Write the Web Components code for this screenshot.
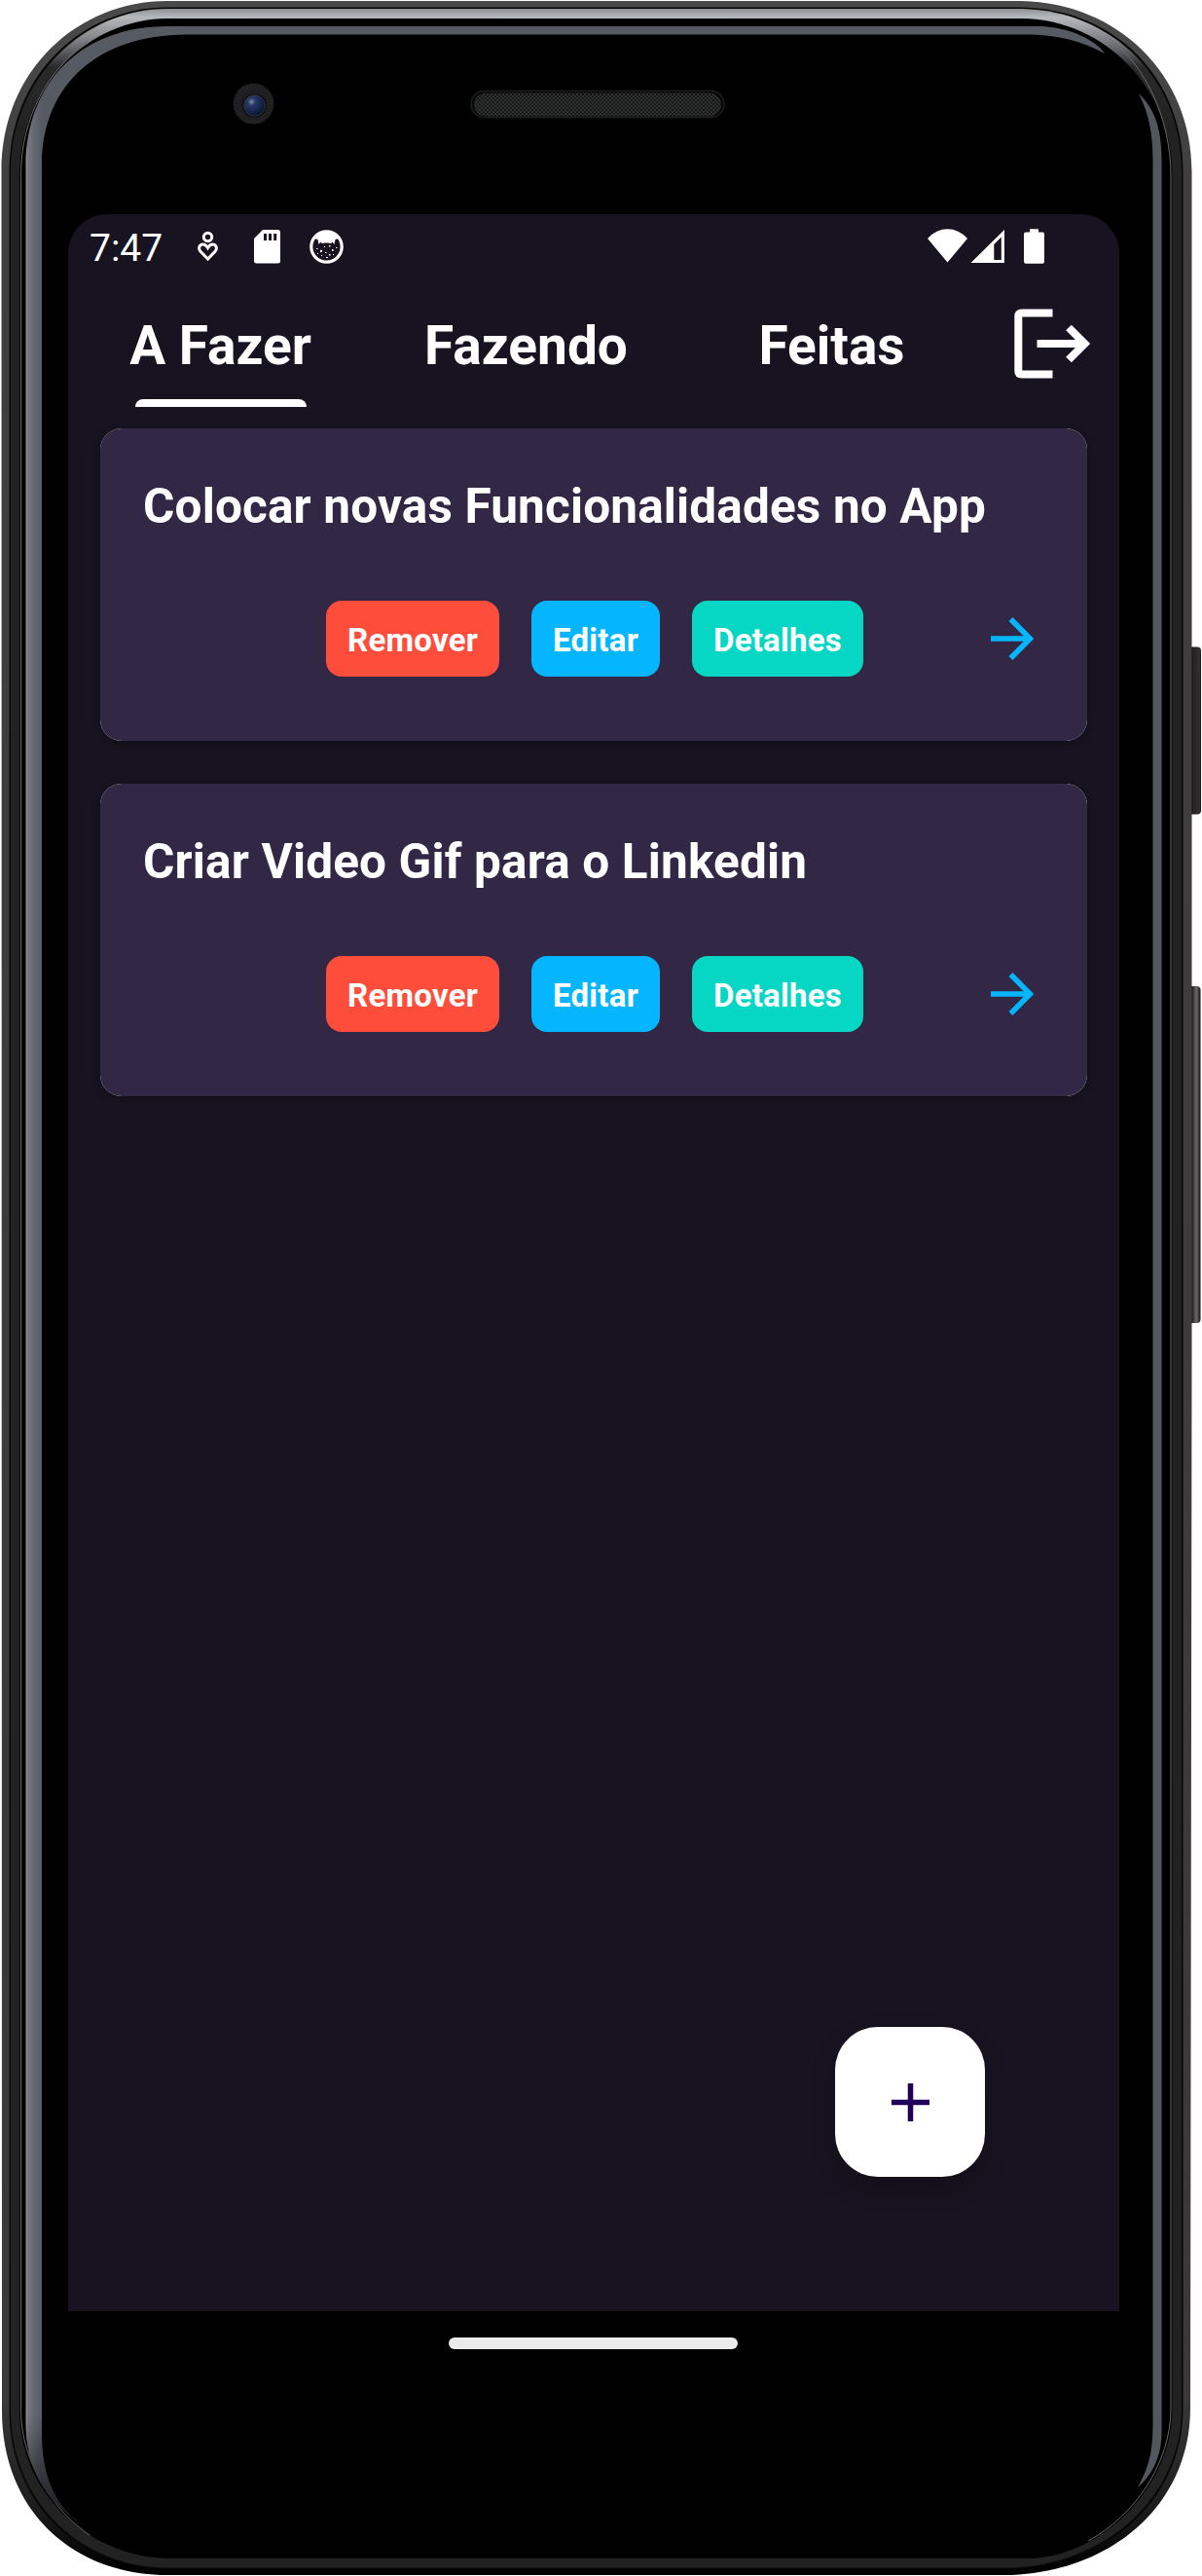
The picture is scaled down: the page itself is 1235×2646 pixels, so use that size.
<!DOCTYPE html>
<html lang="pt-BR">
<head>
<meta charset="utf-8">
<title>Tarefas</title>
<style>
html,body{margin:0;padding:0;background:#fff}
body{width:1235px;height:2646px;overflow:hidden;font-family:Roboto,"Liberation Sans",sans-serif;color:#fff}
</style>
</head>
<body>
<phone-frame>
  <status-bar time="7:47"></status-bar>
  <tab-bar>
    <tab-item active>A Fazer</tab-item>
    <tab-item>Fazendo</tab-item>
    <tab-item>Feitas</tab-item>
  </tab-bar>
  <task-list>
    <task-card>Colocar novas Funcionalidades no App</task-card>
    <task-card>Criar Video Gif para o Linkedin</task-card>
  </task-list>
  <add-button></add-button>
</phone-frame>
<script>
function define(name, html) {
  const t = document.createElement('template');
  t.innerHTML = html;
  customElements.define(name, class extends HTMLElement {
    constructor() {
      super();
      this.attachShadow({mode: 'open'}).appendChild(t.content.cloneNode(true));
    }
    connectedCallback() {
      const time = this.shadowRoot.querySelector('time');
      if (time) time.textContent = this.getAttribute('time');
    }
  });
}

define('phone-body', `
<style>:host{display:block;width:1235px;height:2646px}svg{display:block}</style>
<svg width="1235" height="2646" viewBox="0 0 1235 2646">
  <defs>
    <linearGradient id="rim" x1="0" y1="0" x2="0" y2="2646" gradientUnits="userSpaceOnUse">
      <stop offset="0" stop-color="#4b4a4a"/><stop offset=".07" stop-color="#403e3e"/><stop offset=".93" stop-color="#3a3838"/><stop offset=".975" stop-color="#1c1b1b"/><stop offset=".995" stop-color="#020202"/>
    </linearGradient>
    <linearGradient id="metal" x1="0" y1="8" x2="0" y2="130" gradientUnits="userSpaceOnUse">
      <stop offset="0" stop-color="#85888c"/><stop offset=".04" stop-color="#9fa2a6"/><stop offset=".08" stop-color="#b6b8bc"/><stop offset=".28" stop-color="#7c7e83"/><stop offset=".5" stop-color="#2a2a2b"/><stop offset="1" stop-color="#222"/>
    </linearGradient>
    <linearGradient id="bandL" x1="26" y1="0" x2="43" y2="0" gradientUnits="userSpaceOnUse">
      <stop offset="0" stop-color="#9c9c9c"/><stop offset=".15" stop-color="#77797d"/><stop offset=".5" stop-color="#666a73"/><stop offset="1" stop-color="#565a62"/>
    </linearGradient>
    <linearGradient id="fade" x1="0" y1="2480" x2="0" y2="2596" gradientUnits="userSpaceOnUse">
      <stop offset="0" stop-color="#000" stop-opacity="0"/><stop offset="1" stop-color="#000" stop-opacity=".75"/>
    </linearGradient>
    <linearGradient id="b1" x1="1222" y1="0" x2="1235" y2="0" gradientUnits="userSpaceOnUse">
      <stop offset="0" stop-color="#050505"/><stop offset=".35" stop-color="#242424"/><stop offset=".8" stop-color="#303030"/><stop offset="1" stop-color="#0a0a0a"/>
    </linearGradient>
    <linearGradient id="b2" x1="1222" y1="0" x2="1234" y2="0" gradientUnits="userSpaceOnUse">
      <stop offset="0" stop-color="#111"/><stop offset=".3" stop-color="#2c2c2c"/><stop offset=".6" stop-color="#6b6b6b"/><stop offset=".8" stop-color="#3a3a3a"/><stop offset="1" stop-color="#050505"/>
    </linearGradient>
    <radialGradient id="lens" cx=".36" cy=".32" r=".7">
      <stop offset="0" stop-color="#7f8db0"/><stop offset=".25" stop-color="#2b3a66"/><stop offset=".65" stop-color="#17264f"/><stop offset="1" stop-color="#0b1226"/>
    </radialGradient>
    <pattern id="mesh" width="4" height="4" patternUnits="userSpaceOnUse">
      <rect width="4" height="4" fill="#161717"/><circle cx="1" cy="1" r=".8" fill="#505353"/><circle cx="3" cy="3" r=".8" fill="#505353"/>
    </pattern>
  </defs>
  <rect x="1220" y="664.500" width="14" height="172" rx="4" fill="url(#b1)"/>
  <rect x="1219" y="1013" width="14.500" height="346" rx="4" fill="url(#b2)"/>
  <path fill="url(#rim)" d="M172 1H1050C1148 3 1224.500 76 1224.500 176V1400L1223 2474C1223 2568 1148 2640 1040 2645H172C76 2645 2 2580 2 2476L1.500 176C1.500 72 80 1 172 1Z"/>
  <path fill="#070707" d="M172 7.500H1050C1146 9.500 1215.500 80 1215.500 176V2474C1215.500 2564 1142 2635 1040 2639H172C82 2639 9.500 2572 9.500 2476V176C9.500 78 84 7.500 172 7.500Z"/>
  <path fill="url(#metal)" d="M172 9H1050C1144 11 1214 82 1214 176V2474C1214 2562 1140 2633 1040 2637.500H172C84 2637.500 11 2570 11 2476V176C11 80 86 9 172 9Z"/>
  <path fill="#000" d="M172 19H1050C1136 20 1204.500 92 1204.500 180V2474C1204.500 2554 1134 2624 1060 2628H172C90 2626 20 2560 20 2476V180C20 88 92 19 172 19Z"/>
  <path fill="none" stroke="#6a6a6a" stroke-width="1" d="M90 42C50 72 21.500 120 21.500 180V2476C21.500 2530 56 2580 92 2604M1140 40C1176 66 1203 122 1203 180V2474C1203 2530 1166 2584 1118 2610"/>
  <path fill="url(#bandL)" d="M172 27H1068C1100 28 1127 42 1135 55C1112 42 1085 36 1060 35.500H190C104 36 43 84 43 170V2500C43 2548 60 2578 86 2594C50 2572 27 2540 26.500 2490V170C27 84 84 27 172 27Z"/>
  <path fill="url(#fade)" d="M43.500 2480V2500C43.500 2548 60 2577 87 2594.500C50 2573 26.500 2540 26 2490V2480Z"/>
  <path fill="#54565d" d="M1170 96C1186 112 1193.500 130 1193.500 165V2500C1193 2524 1184 2542 1169 2555C1180 2534 1184.500 2520 1184.500 2490V165C1184.500 136 1180 116 1170 96Z"/>
  <circle cx="260.500" cy="106.500" r="21" fill="#1d1d1f"/>
  <circle cx="260.500" cy="106.500" r="17" fill="none" stroke="#252527" stroke-width="6" stroke-dasharray="1.500 1.500"/>
  <circle cx="261.500" cy="108.500" r="12" fill="#050505"/>
  <circle cx="261.500" cy="108.500" r="10.800" fill="url(#lens)" stroke="#44454a" stroke-width=".8"/>
  <rect x="484" y="93.500" width="260" height="27" rx="13.500" fill="#060606" stroke="#1c1d20" stroke-width="1.500"/>
  <rect x="487" y="95.500" width="254" height="24" rx="12" fill="url(#mesh)"/>
</svg>`);

define('home-bar', `
<style>:host{display:flex;justify-content:center;padding:27px 1px 0 0}i{width:297px;height:12px;border-radius:6px;background:#ebebeb}</style><i></i>`);

define('phone-frame', `
<style>
:host{display:grid;width:1235px;height:2646px}
phone-body,main{grid-area:1/1}
main{z-index:1;padding:220px 85px 0 70px;display:flex;flex-direction:column}
section{height:2154px;background:#171320;border-radius:40px 40px 0 0;display:flex;flex-direction:column}
</style>
<phone-body></phone-body>
<main><section><slot></slot></section><home-bar></home-bar></main>`);

define('status-bar', `
<style>
:host{display:flex;height:66px;padding:0 77px 0 22px;box-sizing:border-box;align-items:center;justify-content:space-between}
div{display:flex;align-items:flex-start}
time{font-size:39px;padding-top:4px;height:66px;box-sizing:border-box;line-height:63px;width:111px}
svg{display:block;fill:#fff}
.i{padding-top:15px;height:51px}
</style>
<div><time></time>
<div class="i">
<svg width="160" height="38" viewBox="203 235 160 38"><g fill="none" stroke="#fff" stroke-width="3"><circle cx="213.500" cy="243.500" r="4.200"/><path d="M213.500 266L206 258.300C203 254.500 205.500 251 208.500 251C211 251 212.300 252.500 213.500 254.500C214.700 252.500 216 251 218.500 251C221.500 251 224 254.500 221 258.300Z"/></g>
<path fill-rule="evenodd" d="M270 236H285.500Q288 236 288 238.500V268Q288 270.500 285.500 270.500H263.500Q261 270.500 261 268V245ZM271 240V247H274V240ZM276 240V247H279V240ZM281.200 240V247H284.200V240Z"/>
<circle cx="335.500" cy="253.500" r="15.700" fill="none" stroke="#fff" stroke-width="3.200"/>
<path d="M323 245Q326 238 335.500 238T348 245L344.500 246L343.500 251L341.500 248.500Q340 251 338 249.500H333Q331 251 329.500 248.500L327.500 251L326.500 246Z"/>
<g><rect x="325" y="255" width="1.500" height="1"/><rect x="329" y="257" width="2" height="2"/><rect x="333" y="253" width="1" height="1"/><rect x="338" y="252" width="1.500" height="1.500"/><rect x="341" y="256" width="1.500" height="2"/><rect x="345" y="254" width="1.500" height="1"/><rect x="334" y="259" width="1.500" height="1"/><rect x="338" y="261" width="1.500" height="1.500"/><rect x="330" y="262" width="1" height="1"/><rect x="335" y="264" width="2" height="1"/><rect x="342" y="261" width="1" height="1"/><rect x="326" y="260" width="1" height="1"/></g></svg></div></div>
<div class="i"><svg width="120" height="38" viewBox="953 235 120 38">
<path d="M973.500 269.500L953 245Q962 235.300 973.500 235.300T994 245Z"/>
<path fill-rule="evenodd" d="M1032 236V270H997.500ZM1028.800 243.500L1021.300 251V267H1028.800Z"/>
<path d="M1058 235.300H1067V238.500H1071Q1073 238.500 1073 240.500V268.500Q1073 270.700 1071 270.700H1054Q1052 270.700 1052 268.500V240.500Q1052 238.500 1054 238.500H1058Z"/></svg></div>`);

define('tab-item', `
<style>
:host{display:flex;flex-direction:column;align-items:center;width:314px;font-weight:700;font-size:55px}
span{line-height:64px;padding:37px 1px 0 0;height:87px;white-space:nowrap}
i{width:176px;height:8px;border-radius:8px 8px 0 0}
:host([active]) i{background:#fff}
</style><span><slot></slot></span><i></i>`);

define('tab-bar', `
<style>
:host{display:flex;height:132px;align-items:stretch}
div{flex:1;display:flex;align-items:center;justify-content:center;padding-top:1px}
svg{display:block}
</style><slot></slot>
<div><svg width="79" height="72" viewBox="0 0 79 72" fill="none" stroke="#fff" stroke-width="8"><path d="M39.500 4.500H8Q4.300 4.500 4.300 8V64Q4.300 67.500 8 67.500H39.500M23.500 36H72M56 19.500L72.500 36L56 52.500" /></svg></div>`);

define('task-list', `
<style>:host{display:flex;flex-direction:column;gap:44px;padding:22px 33px 0;flex:1}</style><slot></slot>`);

define('task-action', `
<style>
:host{display:flex;box-sizing:border-box;height:78px;border-radius:16px;padding:3px 22px 0;line-height:75px;font-size:33px;font-weight:700;letter-spacing:.24px;background:var(--bg)}
</style><slot></slot>`);

define('task-card', `
<style>
:host{display:block;height:321px;background:#fff;border-radius:22px;box-shadow:0 2px 8px rgba(0,0,0,.28)}
article{display:flex;flex-direction:column;box-sizing:border-box;height:321px;padding:51px 44px 0;background:#322845;border-radius:22px}
h2{margin:0 0 68px;font-size:49.5px;line-height:58px;font-weight:700;letter-spacing:.15px;white-space:nowrap}
div{display:flex;padding:0 11px 0 188px;align-items:center;gap:33px}
svg{margin-left:auto;display:block}
</style>
<article><h2><slot></slot></h2>
<div><task-action style="--bg:#ff4d3c">Remover</task-action><task-action style="--bg:#05b6ff">Editar</task-action><task-action style="--bg:#05d7c4">Detalhes</task-action>
<svg width="44" height="44" viewBox="0 0 44 44" fill="none" stroke="#05b6ff" stroke-width="5.500"><path d="M0 22H39M20.500 2L40.300 22L20.500 42"/></svg></div></article>`);

define('add-button', `
<style>
:host{display:flex;align-self:flex-end;margin:0 138px 138px 0;width:154px;height:154px;border-radius:44px;background:#fff;align-items:center;justify-content:center;box-shadow:0 12px 26px rgba(0,0,0,.2)}
svg{display:block}
</style><svg width="39" height="39" viewBox="0 0 39 39" stroke="#21005d" stroke-width="5.500"><path d="M0 19.500H39M19.500 0V39"/></svg>`);
</script>
</body>
</html>
